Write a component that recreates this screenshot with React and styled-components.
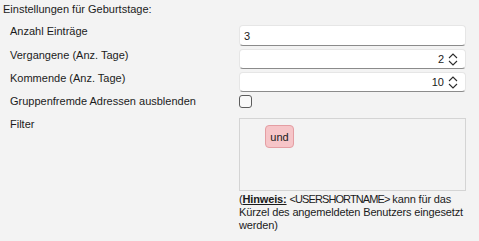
import React from "react";
import styled, { createGlobalStyle } from "styled-components";

const Global = createGlobalStyle`
  html, body { margin: 0; padding: 0; background: #f3f3f3; }
  body { font-family: "Liberation Sans", Arial, sans-serif; font-size: 11px; color: #1b1b1b; }
`;

const Page = styled.div`
  width: 479px;
  height: 241px;
  padding: 2px 0 0 3px;
  box-sizing: border-box;
  overflow: hidden;
`;

const Heading = styled.div`
  line-height: 14px;
`;

const Form = styled.div`
  display: grid;
  grid-template-columns: 229px 227px;
  align-items: start;
  padding-left: 7px;
  margin-top: 9px;
`;

const Label = styled.div`
  line-height: 14px;
  margin-top: -1px;
  white-space: nowrap;
`;

const Field = styled.div`
  height: ${(p) => p.h}px;
  margin-bottom: ${(p) => p.mb || 0}px;
  display: flex;
  align-items: stretch;
`;

const Input = styled.div`
  box-sizing: border-box;
  width: 100%;
  background: #fff;
  border: 1px solid #e6e6e6;
  border-bottom-color: #8b8b8b;
  border-radius: 4px;
  display: flex;
  align-items: center;
  justify-content: ${(p) => (p.right ? "flex-end" : "flex-start")};
  padding: 0 ${(p) => (p.right ? 7 : 0)}px 0 4px;
`;

const Spin = styled.svg`
  width: 10px;
  height: 15px;
  margin-left: 4px;
`;

const Check = styled.div`
  box-sizing: border-box;
  width: 13px;
  height: 13px;
  border: 1px solid #5c5c5c;
  border-radius: 3px;
  background: #f9f9f9;
`;

const FilterBox = styled.div`
  box-sizing: border-box;
  width: 100%;
  border: 1px solid #d4d4d4;
  background: #f3f3f3;
  padding: 6px 0 0 25px;
`;

const Chip = styled.span`
  display: inline-flex;
  align-items: center;
  justify-content: center;
  box-sizing: border-box;
  width: 29px;
  height: 23px;
  background: #f6c5c8;
  border: 1px solid #e49ea3;
  border-radius: 4px;
`;

const Hint = styled.div`
  grid-column: 2;
  line-height: 13px;
  margin-top: 2px;
  white-space: nowrap;
  letter-spacing: -0.15px;
`;

const Caps = styled.span`
  letter-spacing: -0.9px;
`;

const Strong = styled.b`
  text-decoration: underline;
`;

const SpinIcon = () => (
  <Spin viewBox="0 0 10 15">
    <path d="M1 6 L5 2 L9 6 M1 9 L5 13 L9 9" fill="none" stroke="#2b2b2b" strokeWidth="1.1" />
  </Spin>
);

export default function App() {
  return (
    <Page>
      <Global />
      <Heading>Einstellungen für Geburtstage:</Heading>
      <Form>
        <Label>Anzahl Einträge</Label>
        <Field h={21} mb={3}><Input>3</Input></Field>
        <Label>Vergangene (Anz. Tage)</Label>
        <Field h={20} mb={3}><Input right>2<SpinIcon /></Input></Field>
        <Label>Kommende (Anz. Tage)</Label>
        <Field h={20} mb={3}><Input right>10<SpinIcon /></Input></Field>
        <Label>Gruppenfremde Adressen ausblenden</Label>
        <Field h={13} mb={10}><Check /></Field>
        <Label>Filter</Label>
        <Field h={73}><FilterBox><Chip>und</Chip></FilterBox></Field>
        <Hint>
          (<Strong>Hinweis:</Strong> <Caps>&lt;USERSHORTNAME&gt;</Caps> kann für das
          <br />
          Kürzel des angemeldeten Benutzers eingesetzt
          <br />
          werden)
        </Hint>
      </Form>
    </Page>
  );
}
